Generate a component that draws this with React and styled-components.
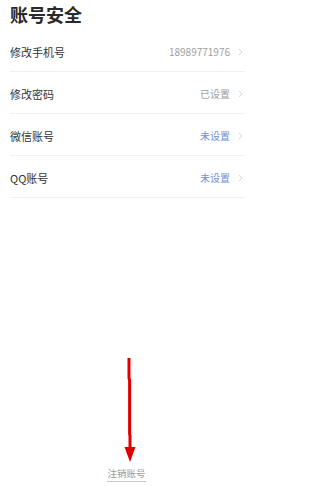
import styled, { createGlobalStyle } from 'styled-components';

const GlobalStyle = createGlobalStyle`
  html, body {
    margin: 0;
    padding: 0;
    background: #fff;
  }
  body {
    font-family: "Noto Sans CJK SC", "Noto Sans", sans-serif;
  }
`

const Page = styled.div`
  position: relative;
  display: flex;
  flex-direction: column;
  width: 253px;
  height: 486px;
  box-sizing: border-box;
  padding: 0 8px 0 10px;
`
const Title = styled.h1`
  margin: 0;
  padding-top: 1px;
  height: 29px;
  font-size: 18px;
  line-height: 26px;
  font-weight: 600;
  color: #2a2a2a;
`
const List = styled.ul`
  list-style: none;
  margin: 0;
  padding: 0;
`
const Row = styled.li`
  display: flex;
  align-items: center;
  justify-content: space-between;
  height: 42px;
  border-bottom: 1px solid #f0f0f0;
  box-sizing: border-box;
  padding-top: 2px;
`
const Label = styled.span`
  font-size: 11px;
  color: #333;
`
const Value = styled.span`
  display: flex;
  align-items: center;
  gap: 8px;
  font-size: 10px;
  color: ${p => (p.$blue ? '#6f8fd8' : '#a0a0a0')};
`
const Chevron = styled.svg`
  width: 5px;
  height: 8px;
  margin-right: 2px;
`
const Spacer = styled.div`
  flex: 1;
`
const Footer = styled.div`
  display: flex;
  justify-content: center;
  padding-bottom: 4px;
  padding-right: 2px;
`
const Cancel = styled.span`
  font-size: 9.5px;
  color: #9a9a9a;
  padding-bottom: 1px;
  border-bottom: 1px solid #c8c8c8;
  line-height: 14px;
`
const Arrow = styled.svg`
  position: absolute;
  left: 122px;
  top: 356px;
  width: 16px;
  height: 108px;
`

const rows = [
  { label: '修改手机号', value: '18989771976' },
  { label: '修改密码', value: '已设置' },
  { label: '微信账号', value: '未设置', blue: true },
  { label: 'QQ账号', value: '未设置', blue: true },
];

function App() {
  return (
    <>
      <GlobalStyle />
      <Page>
        <Title>账号安全</Title>
        <List>
          {rows.map(r => (
            <Row key={r.label}>
              <Label>{r.label}</Label>
              <Value $blue={r.blue}>
                {r.value}
                <Chevron viewBox="0 0 5 8">
                  <path d="M0.8 0.8 L4 4 L0.8 7.2" fill="none" stroke="#d0d0d0" strokeWidth="0.9" />
                </Chevron>
              </Value>
            </Row>
          ))}
        </List>
        <Spacer />
        <Footer>
          <Cancel>注销账号</Cancel>
        </Footer>
        <Arrow viewBox="0 0 16 108">
          <path d="M7 2 L7 22 L7.6 24 L7.6 78 L8 80 L8 92" fill="none" stroke="#e10000" strokeWidth="3" />
          <polygon points="2.5,91 13.5,91 8,106" fill="#e10000" />
        </Arrow>
      </Page>
    </>
  );
}

export default App;
